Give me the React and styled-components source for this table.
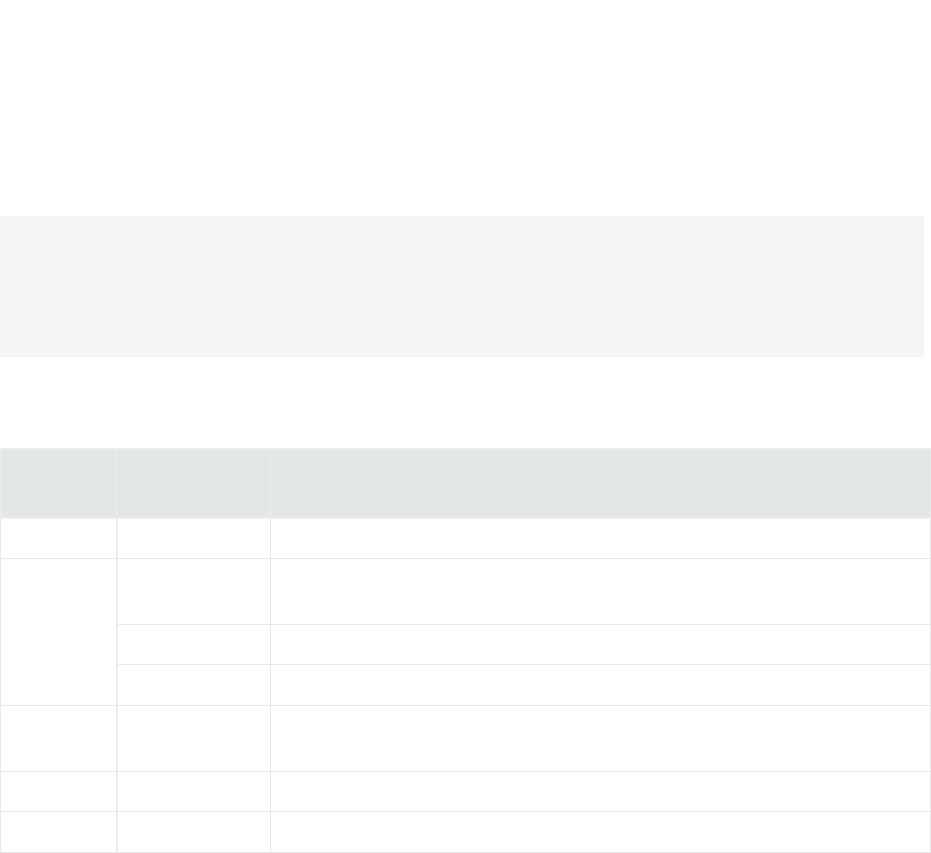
import React from "react";
import styled, { createGlobalStyle } from "styled-components";

const GlobalStyle = createGlobalStyle`
  body {
    margin: 0;
    background: #ffffff;
    font-family: "Open Sans", "Liberation Sans", sans-serif;
  }
`;

const rows = [
  { group: true, span: 1, height: 40 },
  { group: true, span: 3, height: 66 },
  { group: false, height: 40 },
  { group: false, height: 41 },
  { group: true, span: 1, height: 66 },
  { group: true, span: 1, height: 40 },
  { group: true, span: 1, height: 41 },
];

const App = () => {
  return (
    <>
      <GlobalStyle />
      <Page>
        {/* Note block */}
        <Note />

        {/* Reference table */}
        <Table>
          <colgroup>
            <col style={{ width: 116 }} />
            <col style={{ width: 154 }} />
            <col />
          </colgroup>
          <thead>
            <tr>
              <HeadCell />
              <HeadCell />
              <HeadCell />
            </tr>
          </thead>
          <tbody>
            {rows.map((row, i) => (
              <Row key={i} $height={row.height}>
                {row.group && <GroupCell rowSpan={row.span} />}
                <Cell />
                <Cell />
              </Row>
            ))}
          </tbody>
        </Table>
      </Page>
    </>
  );
};

export default App;

const Page = styled.div`
  display: flex;
  flex-direction: column;
  padding-top: 216px;
  width: 931px;
`;

const Note = styled.div`
  width: 924px;
  height: 141px;
  background-color: #f5f5f5;
`;

const Table = styled.table`
  margin-top: 91px;
  width: 931px;
  border-collapse: collapse;
  table-layout: fixed;
  border: 1px solid #e8e8e8;
`;

const HeadCell = styled.th`
  height: 67px;
  padding: 0;
  background-color: #e3e7e8;
  border: 1px solid #ececec;
  border-top: 2px solid #ececec;
  border-bottom: 2px solid #eeeeee;
`;

const Row = styled.tr`
  height: ${(p) => p.$height}px;
`;

const Cell = styled.td`
  padding: 0;
  border: 1px solid #e9e9e9;
`;

const GroupCell = styled(Cell)`
  border-right: 2px solid #ececec;
`;
